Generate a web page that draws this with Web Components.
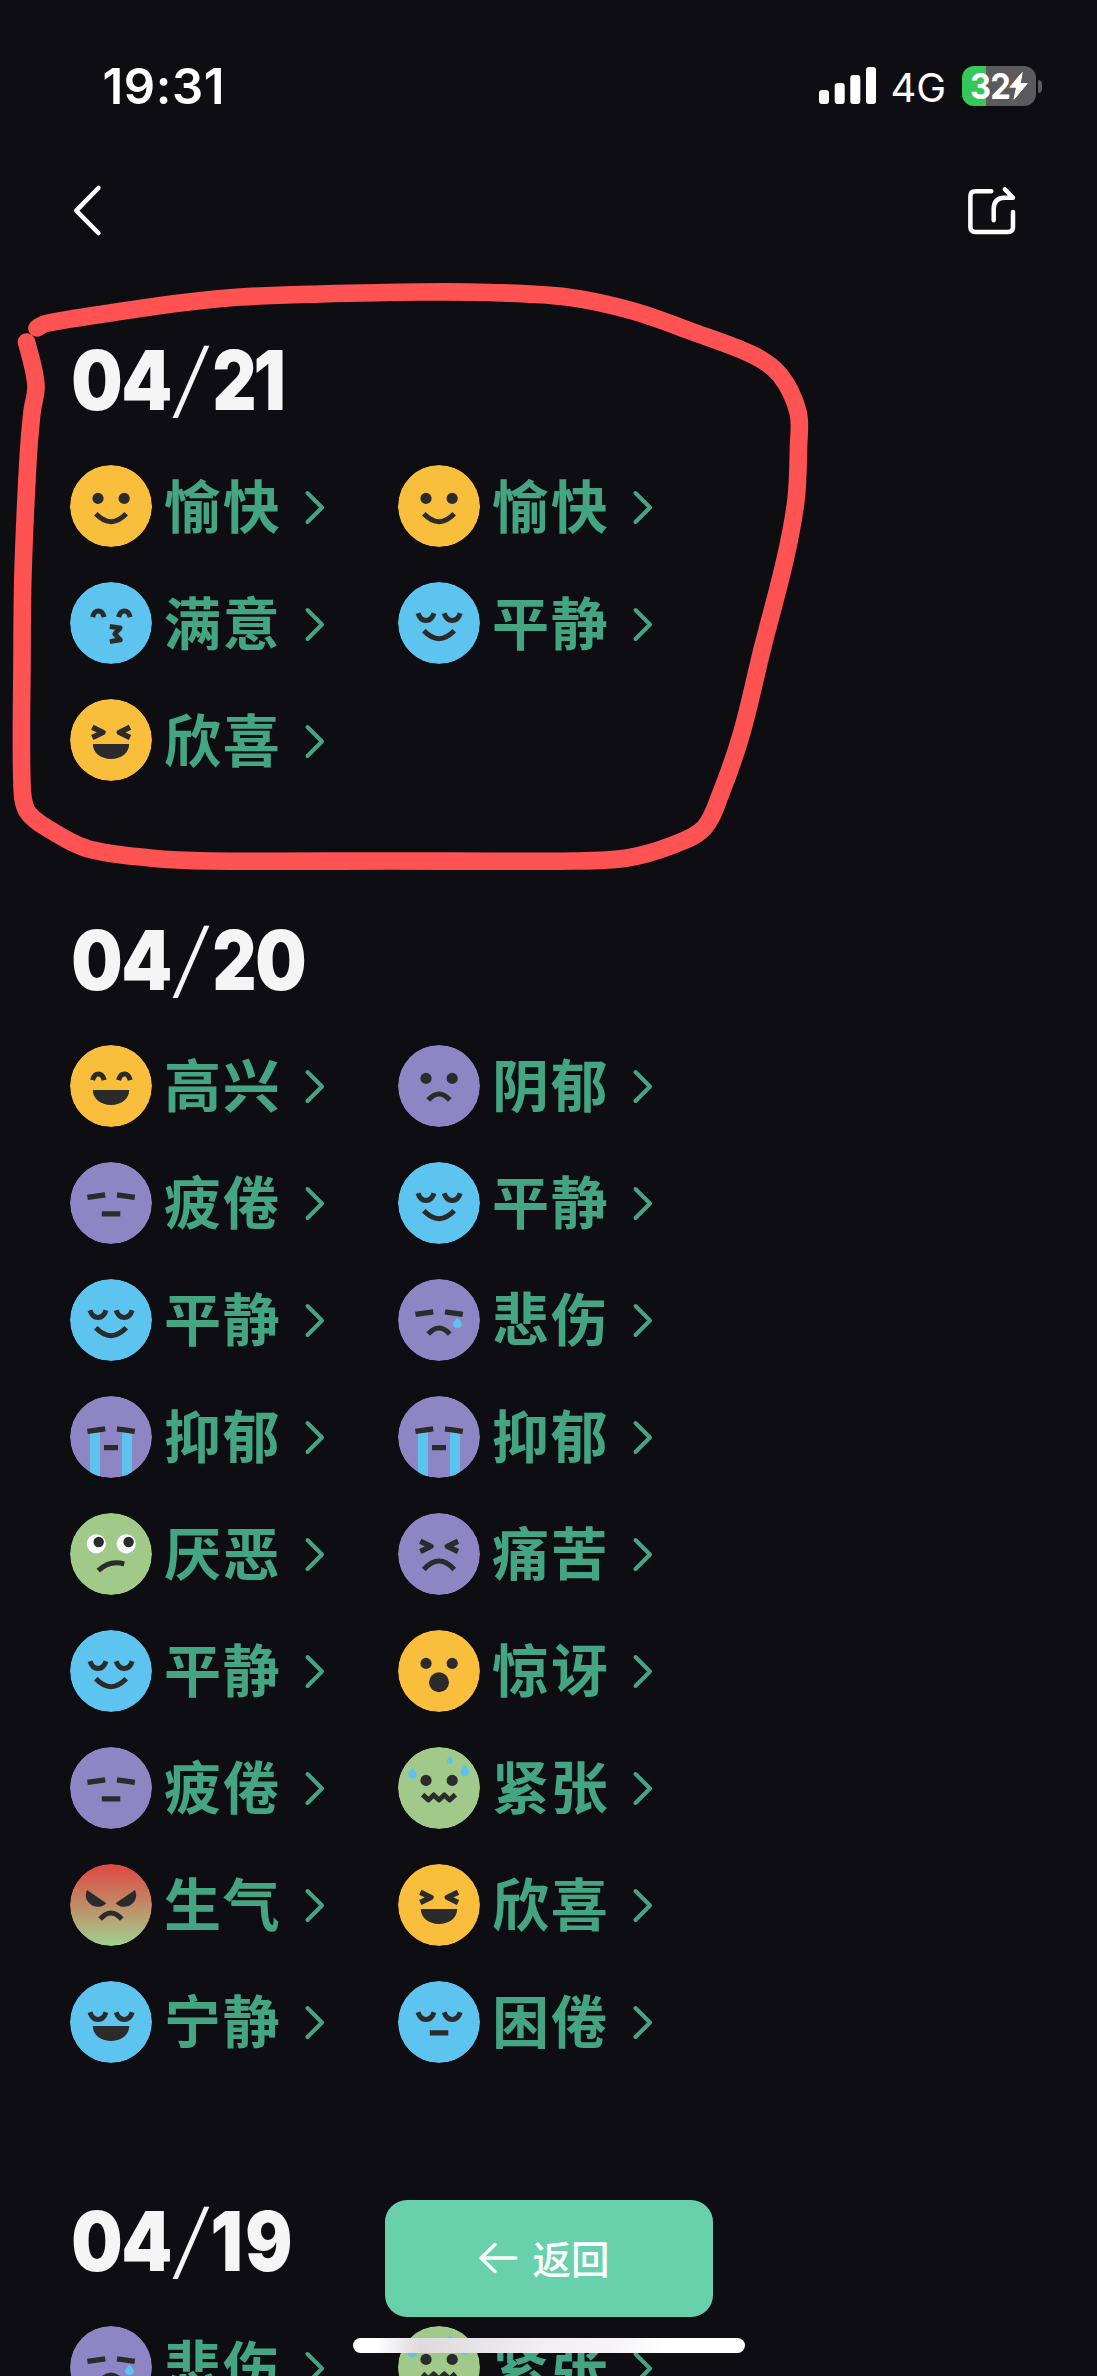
<!DOCTYPE html>
<html lang="zh-CN">
<head>
<meta charset="utf-8">
<title>情绪记录</title>
<style>
html,body{margin:0;background:#0e0d12}
</style>
</head>
<body>
<mood-screen></mood-screen>
<script>
const define = (name, html, setup) => customElements.define(name, class extends HTMLElement {
  connectedCallback() {
    if (this.shadowRoot) return;
    const t = document.createElement('template');
    t.innerHTML = html;
    this.attachShadow({mode: 'open'}).append(t.content.cloneNode(true));
    if (setup) setup(this, this.shadowRoot);
  }
});

/* Face parts, on an 82 x 82 grid */
const DARK = '#2b2b2b', TEAR = '#5bc3ee';
const line = (d, w = 5) => `<path d="${d}" fill="none" stroke="${DARK}" stroke-width="${w}" stroke-linejoin="round"/>`;
const dots = `<circle cx="28" cy="33.4" r="5.6" fill="${DARK}"/><circle cx="54.2" cy="33.4" r="5.6" fill="${DARK}"/>`;
const arcs = line('M22.6 35.2C24.6 26.8 32.2 26.8 34.2 35.2M48.6 35.2C50.6 26.8 58.2 26.8 60.2 35.2');
const lids = line('M20 31.3C23 40.9 33 40.9 36 31.3M46.2 31.3C49.2 40.9 59.2 40.9 62.2 31.3');
const squint = line('M22.3 28.3L33 33.4L22.3 38.5M60 28.3L49.3 33.4L60 38.5', 5.4);
const brows = line('M17.4 35.4L35.2 32.8M47 32.8L64.8 35.4', 5.4);
const smile = line('M25.8 48.8Q41 64.5 56.2 48.8');
const frown = line('M30.2 55Q41 43 51.8 55');
const bigFrown = line('M25.8 56.5Q41 39.5 56.2 56.5');
const grin = `<path d="M22.8 45H59.2C59.2 53.5 51.5 60 41 60S22.8 53.5 22.8 45Z" fill="${DARK}"/>`;
const flat = line('M31.8 51.9H50.3', 5.3);
const drop = (x, y, w, h) => `<path d="M${x} ${y}C${x + w * .12} ${y + h * .28} ${x + w / 2} ${y + h * .4} ${x + w / 2} ${y + h * .68}C${x + w / 2} ${y + h * 1.1} ${x - w / 2} ${y + h * 1.1} ${x - w / 2} ${y + h * .68}C${x - w / 2} ${y + h * .4} ${x - w * .12} ${y + h * .28} ${x} ${y}Z" fill="${TEAR}"/>`;
const Y = '#f9be3b', B = '#5dc3ef', P = '#8e86c4', G = '#a1c98a';
const FACES = {
  愉快: [Y, dots + smile],
  满意: [B, arcs + line('M39.8 44.6L50 46L44.8 51.8L50.2 57.8L39.8 59.6')],
  平静: [B, lids + smile],
  欣喜: [Y, squint + grin],
  高兴: [Y, arcs + grin],
  阴郁: [P, dots + frown],
  疲倦: [P, brows + flat],
  悲伤: [P, brows + frown + drop(59.5, 38, 8.8, 11)],
  抑郁: [P, `<path d="M20 35H30V82H20ZM52 35H62V82H52Z" fill="${TEAR}"/>` + brows + line('M34 51.7H48', 5.3)],
  厌恶: [G, `<circle cx="26.3" cy="30.8" r="9.6" fill="#fff"/><circle cx="56.2" cy="30.8" r="9.6" fill="#fff"/><circle cx="28.7" cy="29" r="5.2" fill="${DARK}"/><circle cx="58.6" cy="29" r="5.2" fill="${DARK}"/>` + line('M28.3 57.6C36 50.5 45.5 48.4 54.2 51')],
  痛苦: [P, squint + bigFrown],
  惊讶: [Y, dots + `<circle cx="41" cy="52.3" r="10" fill="${DARK}"/>`],
  紧张: [G, dots + line('M24.6 47.6L30.4 53L35.7 48L41 53L46.3 48L51.6 53L57.4 47.6', 5) + drop(14.4, 19.8, 8.4, 12) + drop(51.8, 8, 5.8, 9) + drop(66.8, 17, 8.4, 12)],
  生气: ['url(#g)', `<path d="M17 26L36.4 39.2C32 43.8 24.5 44.2 19.6 39.6C15.4 35.6 15 30.5 17 26Z" fill="${DARK}"/><path d="M65 26L45.6 39.2C50 43.8 57.5 44.2 62.4 39.6C66.6 35.6 67 30.5 65 26Z" fill="${DARK}"/>` + frown],
  宁静: [B, lids + grin],
  困倦: [B, lids + flat]
};

define('mood-face', `<style>:host{display:block;width:82px;height:82px;flex:none}svg{display:block;border-radius:50%}</style>
<svg width="82" height="82" viewBox="0 0 82 82"></svg>`, (el, root) => {
  const [fill, parts] = FACES[el.getAttribute('mood')];
  root.querySelector('svg').innerHTML = `<defs><linearGradient id="g" x1="0" y1="0" x2="0" y2="1"><stop offset=".06" stop-color="#dc4e44"/><stop offset="1" stop-color="#a0d18f"/></linearGradient></defs><circle cx="41" cy="41" r="41" fill="${fill}"/>${parts}`;
});

define('mood-item', `<style>
:host{display:flex;align-items:center;height:82px;color:#43a582}
span{margin:-7px 0 0 12px;width:126px;font:700 57px/82px "Noto Sans CJK SC",sans-serif;letter-spacing:1.7px;white-space:nowrap}
.chev{margin:3px 0 0 8px;flex:none}
</style><span><slot></slot></span>
<svg class="chev" width="28" height="40" viewBox="0 0 28 40"><path d="M9.5 5L24 19.5L9.5 34" fill="none" stroke="currentColor" stroke-width="4" stroke-linecap="round" stroke-linejoin="round"/></svg>`,
(el, root) => {
  const face = document.createElement('mood-face');
  face.setAttribute('mood', el.textContent);
  root.querySelector('span').before(face);
});

/* Heading digits: [left bearing, ink width, right bearing]; the bold face is condensed to these widths */
const DIGITS = {0: [2, 47.6, 2], 1: [1, 27, 5], 2: [2.2, 39.8, .8], 4: [1, 46.2, 1.5], 9: [2, 43.5, 2]};
const pen = document.createElement('canvas').getContext('2d');

define('mood-day', `<style>
:host{display:block;padding:0 70px}
h2{margin:0 0 0 1px;height:60px;display:flex;color:#f5f5f5;font:900 82px/60px Inter,sans-serif;white-space:nowrap}
h2 b{font-weight:900;display:block;flex:none;transform-origin:0 50%}
h2 i{display:flex;justify-content:center;width:41px;font:300 83px/60px Inter,sans-serif;transform:translateY(-2px) skewX(-9.5deg)}
.grid{display:grid;grid-template-columns:328px 328px;grid-auto-rows:82px;row-gap:35.06px;margin-top:54px}
</style><h2></h2><div class="grid"></div>`, (el, root) => {
  pen.font = '900 82px Inter';
  root.querySelector('h2').innerHTML = [...el.getAttribute('date')].map(c => {
    if (c === '/') return '<i>/</i>';
    const [l, w, r] = DIGITS[c], m = pen.measureText(c);
    const s = w / (m.actualBoundingBoxRight + m.actualBoundingBoxLeft);
    return `<b style="width:${l + w + r}px;transform:translateX(${l + m.actualBoundingBoxLeft * s}px) scaleX(${s})">${c}</b>`;
  }).join('');
  root.querySelector('.grid').innerHTML = el.getAttribute('moods').split(' ').map(m => `<mood-item>${m}</mood-item>`).join('');
});

define('status-bar', `<style>
:host{display:flex;align-items:center;height:172px;box-sizing:border-box;padding:0 55px 0 102.5px;color:#fff;font-family:Inter,sans-serif}
.time{font-size:49px;font-weight:600;flex:1;letter-spacing:.6px}
.net{font-size:40px;margin:2px 0 0 14px;width:71px;white-space:nowrap}
.bat{display:flex;align-items:center;gap:2px}
.cell{width:74px;height:40px;border-radius:12px;background:linear-gradient(90deg,#35c759 24px,#5b5b5e 24px);display:flex;align-items:center;justify-content:center;font-size:36px;font-weight:700}
.cell span{letter-spacing:-1px;transform:scaleX(.91);margin:0 -2px 0 -1px}
.tip{width:4.5px;height:13px;border-radius:0 6px 6px 0;background:#5b5b5e}
</style><div class="time">19:31</div>
<svg width="58" height="38" viewBox="0 0 58 38"><g fill="#fff"><rect y="23" width="10" height="14" rx="3"/><rect x="15.7" y="16" width="10" height="21" rx="3"/><rect x="31.3" y="8" width="10" height="29" rx="3"/><rect x="47" y="0" width="10" height="37" rx="3"/></g></svg>
<div class="net">4G</div>
<div class="bat"><div class="cell"><span>32</span><svg width="19" height="28" viewBox="0 0 19 28"><path d="M13.2.5L.8 15.2H7.6L5 27.2L18.2 11.6H11.2Z" fill="#fff" stroke="#fff" stroke-linejoin="round"/></svg></div><div class="tip"></div></div>`);

define('nav-bar', `<style>:host{display:flex;justify-content:space-between;align-items:center;height:78px;padding:0 78px 0 70px}svg{display:block}</style>
<svg width="34" height="54" viewBox="70 184 34 54"><path d="M98.4 188L76.3 210.7L98.4 233" fill="none" stroke="#fff" stroke-width="4.6" stroke-linecap="round" stroke-linejoin="round"/></svg>
<svg width="54" height="54" viewBox="965 184 54 54"><g fill="none" stroke="#fff" stroke-width="4.5" stroke-linecap="round" stroke-linejoin="round"><path d="M991.3 191.2H975.5Q970.4 191.2 970.4 196.3V227Q970.4 232 975.5 232H1008Q1013 232 1013 227V212"/><path d="M993.7 220.3V209Q993.7 197.7 1005 197.7H1013L1004.8 189.3"/></g></svg>`);

define('back-button', `<style>
:host{position:absolute;left:385px;top:2200px;width:328px;height:117px;box-sizing:border-box;padding:0 10px 2px 0;border-radius:22px;background:#68d1ac;color:#fff;display:flex;align-items:center;justify-content:center;gap:14px;font:500 38.5px/1 "Noto Sans CJK SC",sans-serif}
svg{flex:none}
</style><svg width="40" height="32" viewBox="0 0 40 32"><path d="M17 2.5L3 16L17 29.5M3 16H38" fill="none" stroke="#fff" stroke-width="3.3" stroke-linecap="round" stroke-linejoin="round"/></svg><span><slot></slot></span>`);

define('home-indicator', `<style>:host{position:absolute;left:353px;top:2338px;width:392px;height:15px;border-radius:8px;background:linear-gradient(90deg,#fff 6%,#dedade 17%,#e3dfe3 25%,#f2eff2 48%,#f6f4f6 66%,#fff 80%)}</style>`);

/* Freehand marker loop: a smooth curve through the sampled points */
define('marker-loop', `<style>:host{position:absolute;left:0;top:0;pointer-events:none}svg{display:block}</style>
<svg width="830" height="900"><path fill="none" stroke="#ff5252" stroke-width="17.6" stroke-linecap="round" stroke-linejoin="round"/></svg>`, (el, root) => {
  const p = [[37,328],[46,323.5],[110,313],[180,303],[240,297],[320,294],[420,292],[490,292.5],[567,297],[633,311],[693,332],[753,355],[780,375],[798,412],[798.5,447],[796,500],[785,560],[762,650],[742,732],[721,793],[704,828],[673,845],[627,858],[573,861],[390,861],[210,861],[150,858],[87,848.5],[47,828],[27,811],[22,785],[22,660],[23,573],[28,460],[32,412],[36,388],[33,367],[26.5,342]];
  let d = `M${p[0]}`;
  for (let i = 0; i < p.length - 1; i++) {
    const a = p[Math.max(i - 1, 0)], b = p[i], c = p[i + 1], e = p[Math.min(i + 2, p.length - 1)];
    const len = Math.hypot(c[0] - b[0], c[1] - b[1]);
    const tan = (m, n) => { const l = Math.hypot(n[0] - m[0], n[1] - m[1]); return [(n[0] - m[0]) / l * len / 3, (n[1] - m[1]) / l * len / 3]; };
    const t1 = tan(a, c), t2 = tan(b, e);
    d += `C${b[0] + t1[0]} ${b[1] + t1[1]} ${c[0] - t2[0]} ${c[1] - t2[1]} ${c}`;
  }
  root.querySelector('path').setAttribute('d', d);
});

define('mood-screen', `<style>
:host{display:block;position:relative;width:1097px;height:2376px;overflow:hidden;background:#0e0d12}
main{display:flex;flex-direction:column;gap:149.5px;padding-top:101px}
</style><status-bar></status-bar><nav-bar></nav-bar>
<main>
<mood-day date="04/21" moods="愉快 愉快 满意 平静 欣喜"></mood-day>
<mood-day date="04/20" moods="高兴 阴郁 疲倦 平静 平静 悲伤 抑郁 抑郁 厌恶 痛苦 平静 惊讶 疲倦 紧张 生气 欣喜 宁静 困倦"></mood-day>
<mood-day date="04/19" moods="悲伤 紧张"></mood-day>
</main>
<marker-loop></marker-loop><back-button>返回</back-button><home-indicator></home-indicator>`);
</script>
</body>
</html>
